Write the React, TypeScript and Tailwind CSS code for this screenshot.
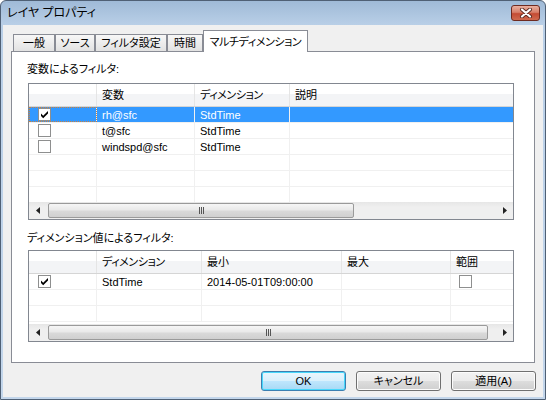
import React from "react";

const FONT =
  "font-['Liberation_Sans','Noto_Sans_CJK_JP',sans-serif] [font-feature-settings:'palt']";

function Check({ checked }: { checked: boolean }) {
  return (
    <div className="w-[13px] h-[13px] border border-[#8e8f8f] bg-white flex items-center justify-center">
      {checked && (
        <svg width="11" height="11" viewBox="0 0 11 11">
          <path d="M2 4.5 L4.2 6.7 L9 2 L9 4.6 L4.2 9.3 L2 7.1 Z" fill="#000" />
        </svg>
      )}
    </div>
  );
}

function Arrow({ dir }: { dir: "l" | "r" }) {
  return (
    <div className="w-[17px] h-full flex items-center justify-center">
      <svg width="4" height="7" viewBox="0 0 4 7">
        {dir === "l" ? (
          <path d="M4 0 L0 3.5 L4 7 Z" fill="#222" />
        ) : (
          <path d="M0 0 L4 3.5 L0 7 Z" fill="#222" />
        )}
      </svg>
    </div>
  );
}

function ScrollBar({ thumb }: { thumb: string }) {
  return (
    <div className="h-[17px] shrink-0 flex items-center bg-[linear-gradient(to_bottom,#e6e6e6_0%,#efefef_30%,#efefef_100%)]">
      <Arrow dir="l" />
      <div
        className={`ml-[2px] h-[15px] rounded-[2px] border border-[#9a9a9a] bg-[linear-gradient(to_bottom,#f6f6f6_0%,#e9e9e9_45%,#d9d9d9_55%,#d0d0d0_100%)] flex items-center justify-center gap-[1px] ${thumb}`}
      >
        <div className="w-[1px] h-[7px] bg-[#555]" />
        <div className="w-[1px] h-[7px] bg-[#555]" />
        <div className="w-[1px] h-[7px] bg-[#555]" />
      </div>
      <div className="flex-1" />
      <Arrow dir="r" />
    </div>
  );
}

function HeaderCell({ w, children }: { w: string; children?: React.ReactNode }) {
  return (
    <div className={`${w} h-full shrink-0 border-r border-[#e5e5e5] flex items-center pl-[5px]`}>
      {children}
    </div>
  );
}

function Header({ children }: { children: React.ReactNode }) {
  return (
    <div className="h-[23px] shrink-0 flex border-b border-[#d5d5d5] bg-[linear-gradient(to_bottom,#ffffff_0%,#ffffff_45%,#f3f4f6_46%,#f3f4f6_100%)]">
      {children}
    </div>
  );
}

type R1 = { c?: boolean; v?: string; d?: string; sel?: boolean; empty?: boolean };

function Table1() {
  const rows: R1[] = [
    { c: true, v: "rh@sfc", d: "StdTime", sel: true },
    { c: false, v: "t@sfc", d: "StdTime" },
    { c: false, v: "windspd@sfc", d: "StdTime" },
    { empty: true },
    { empty: true },
    { empty: true },
  ];
  return (
    <div className="w-[486px] h-[137px] border border-[#828790] bg-white flex flex-col overflow-hidden">
      <Header>
        <HeaderCell w="w-[68px]" />
        <HeaderCell w="w-[98px]">変数</HeaderCell>
        <HeaderCell w="w-[95px]">
          <span className="tracking-[-0.4px]">ディメンション</span>
        </HeaderCell>
        <div className="flex-1 flex items-center pl-[5px]">説明</div>
      </Header>
      <div className="flex-1 overflow-hidden">
        {rows.map((r, i) => (
          <div
            key={i}
            className={`h-[16px] flex border-b border-[#f0f0f0] ${r.sel ? "bg-[#3399ff] text-white" : ""}`}
          >
            <div
              className={`w-[68px] shrink-0 h-full border-r border-[#f0f0f0] flex items-center pl-[9px] ${r.sel ? "outline outline-1 outline-dotted -outline-offset-1 outline-[#c9803d]" : ""}`}
            >
              {!r.empty && <Check checked={!!r.c} />}
            </div>
            <div className="w-[98px] shrink-0 h-full border-r border-[#f0f0f0] flex items-center pl-[5px] text-[11px]">
              {r.v}
            </div>
            <div className="w-[95px] shrink-0 h-full border-r border-[#f0f0f0] flex items-center pl-[5px] text-[11px]">
              {r.d}
            </div>
            <div className="flex-1" />
          </div>
        ))}
      </div>
      <ScrollBar thumb="w-[306px]" />
    </div>
  );
}

function Table2() {
  const rows = [0, 1, 2];
  return (
    <div className="w-[486px] h-[92px] border border-[#828790] bg-white flex flex-col overflow-hidden">
      <Header>
        <HeaderCell w="w-[68px]" />
        <HeaderCell w="w-[105px]">
          <span className="tracking-[-0.4px]">ディメンション</span>
        </HeaderCell>
        <HeaderCell w="w-[140px]">最小</HeaderCell>
        <HeaderCell w="w-[109px]">最大</HeaderCell>
        <div className="flex-1 flex items-center pl-[5px]">範囲</div>
      </Header>
      <div className="flex-1 overflow-hidden">
        {rows.map((i) => (
          <div key={i} className="h-[16px] flex border-b border-[#f0f0f0]">
            <div className="w-[68px] shrink-0 h-full border-r border-[#f0f0f0] flex items-center pl-[9px]">
              {i === 0 && <Check checked={true} />}
            </div>
            <div className="w-[105px] shrink-0 h-full border-r border-[#f0f0f0] flex items-center pl-[5px] text-[11px]">
              {i === 0 ? "StdTime" : ""}
            </div>
            <div className="w-[140px] shrink-0 h-full border-r border-[#f0f0f0] flex items-center pl-[5px] text-[11px]">
              {i === 0 ? "2014-05-01T09:00:00" : ""}
            </div>
            <div className="w-[109px] shrink-0 h-full border-r border-[#f0f0f0]" />
            <div className="flex-1 h-full flex items-center pl-[8px]">
              {i === 0 && <Check checked={false} />}
            </div>
          </div>
        ))}
      </div>
      <ScrollBar thumb="w-[440px]" />
    </div>
  );
}

function Tab({ w, children }: { w: string; children: React.ReactNode }) {
  return (
    <div
      className={`${w} h-[17px] shrink-0 border border-b-0 border-[#898c95] bg-[linear-gradient(to_bottom,#f7f7f7_0%,#ededed_50%,#e2e2e2_100%)] flex items-center justify-center`}
    >
      {children}
    </div>
  );
}

function Button({ children, primary }: { children: React.ReactNode; primary?: boolean }) {
  return (
    <div
      className={`w-[85px] h-[20px] rounded-[3px] border flex items-center justify-center ${
        primary
          ? "border-[#3c7fb1] bg-[linear-gradient(to_bottom,#eaf6fd_0%,#d9f0fc_50%,#bee6fd_51%,#a7d9f5_100%)] shadow-[inset_0_0_0_1px_#48d8fb]"
          : "border-[#707070] bg-[linear-gradient(to_bottom,#f2f2f2_0%,#ebebeb_50%,#dddddd_51%,#cfcfcf_100%)] shadow-[inset_0_0_0_1px_#fcfcfc]"
      }`}
    >
      {children}
    </div>
  );
}

function CloseButton() {
  return (
    <div className="mt-[4px] mr-[3px] w-[29px] h-[16px] rounded-[3px] border border-[#6e2a20] bg-[linear-gradient(to_bottom,#eab0a0_0%,#d77f69_45%,#c44b33_55%,#cf6a4f_100%)] flex items-center justify-center">
      <svg width="14" height="10" viewBox="0 0 14 10">
        <path d="M3 1.5 L11 8.5 M11 1.5 L3 8.5" stroke="#5a2a22" strokeWidth="4" strokeLinecap="round" />
        <path d="M3 1.5 L11 8.5 M11 1.5 L3 8.5" stroke="#ffffff" strokeWidth="2.2" strokeLinecap="round" />
      </svg>
    </div>
  );
}

export default function App() {
  return (
    <div
      className={`w-[546px] h-[400px] overflow-hidden flex flex-col rounded-t-[6px] border border-[#4f6075] bg-[linear-gradient(to_bottom,#9fbad7_0%,#b9cfe7_6%,#c3d6eb_100%)] px-[2px] pb-[2px] text-[11px] leading-[14px] text-black whitespace-nowrap ${FONT}`}
    >
      <div className="h-[24px] shrink-0 flex items-start justify-between">
        <span className="pl-[4px] pt-[5px] text-[12px]">レイヤ プロパティ</span>
        <CloseButton />
      </div>
      <div className="flex-1 bg-[#f0f0f0] flex flex-col">
        <div className="h-[26px] shrink-0 flex items-end pl-[10px]">
          <Tab w="w-[42px]">一般</Tab>
          <Tab w="w-[40px]">ソース</Tab>
          <Tab w="w-[72px]">フィルタ設定</Tab>
          <Tab w="w-[36px]">時間</Tab>
          <div className="relative z-10 -mb-px h-[22px] w-[105px] shrink-0 bg-white border border-b-0 border-[#898c95] flex items-center justify-center tracking-[-0.4px]">
            マルチディメンション
          </div>
        </div>
        <div className="ml-[8px] w-[524px] h-[312px] shrink-0 bg-white border border-[#898c95] flex flex-col pl-[16px]">
          <div className="mt-[10px] -ml-px h-[14px]">変数によるフィルタ:</div>
          <div className="mt-[7px]">
            <Table1 />
          </div>
          <div className="mt-[11px] -ml-px h-[14px]">ディメンション値によるフィルタ:</div>
          <div className="mt-[5px]">
            <Table2 />
          </div>
        </div>
        <div className="mt-[8px] flex justify-end gap-[10px] pr-[7px]">
          <Button primary>OK</Button>
          <Button>キャンセル</Button>
          <Button>適用(A)</Button>
        </div>
      </div>
    </div>
  );
}
